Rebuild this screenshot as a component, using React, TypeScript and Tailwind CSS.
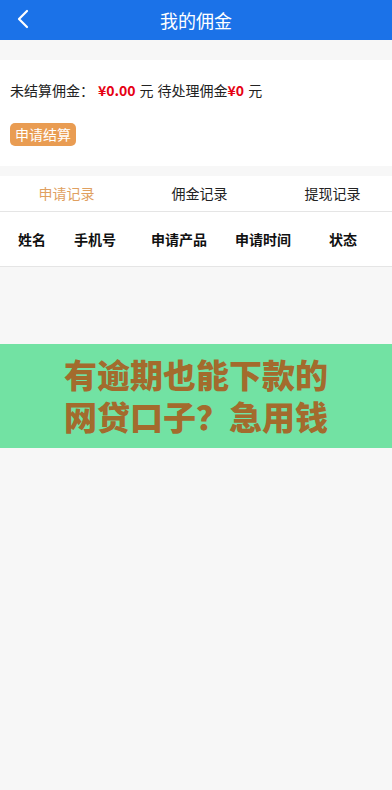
import React from "react";

export default function App() {
  const font = { fontFamily: '"Noto Sans CJK SC", "Noto Sans", sans-serif' };
  return (
    <div className="w-[392px] h-[790px] bg-[#f7f7f7] flex flex-col overflow-hidden" style={font}>
      <div className="h-[40px] bg-[#1b72e8] flex items-center relative shrink-0">
        <svg className="absolute left-[16px] top-[9px]" width="14" height="20" viewBox="0 0 14 20">
          <path d="M11 2 L3 10 L11 18" fill="none" stroke="white" strokeWidth="2.2" strokeLinecap="round" strokeLinejoin="round" />
        </svg>
        <div className="flex-1 text-center text-white text-[18px]">我的佣金</div>
      </div>
      <div className="h-[20px] shrink-0" />
      <div className="bg-white h-[106px] shrink-0 px-[10px] pt-[18px]">
        <div className="text-[14px] text-[#222] leading-[24px] flex items-center">
          <span>未结算佣金：</span>
          <span className="text-[#e60012] font-bold ml-[4px]">¥0.00</span>
          <span className="ml-[4px]">元</span>
          <span className="ml-[4px]">待处理佣金</span>
          <span className="text-[#e60012] font-bold">¥0</span>
          <span className="ml-[4px]">元</span>
        </div>
        <div className="mt-[19px]">
          <span className="inline-block bg-[#e99c52] text-white text-[14px] leading-[23px] px-[5px] rounded-[5px]">申请结算</span>
        </div>
      </div>
      <div className="h-[10px] shrink-0" />
      <div className="bg-white h-[36px] flex items-center border-b border-[#e5e5e5] shrink-0 text-[14px] overflow-hidden">
        <div className="w-[133px] shrink-0 text-center text-[#e0a060]">申请记录</div>
        <div className="w-[133px] shrink-0 text-center text-[#222]">佣金记录</div>
        <div className="w-[133px] shrink-0 text-center text-[#222]">提现记录</div>
      </div>
      <div className="bg-white h-[55px] flex items-center border-b border-[#e5e5e5] shrink-0 text-[14px] font-bold text-[#111]">
        <div className="w-[64px] text-center">姓名</div>
        <div className="w-[62px] text-center">手机号</div>
        <div className="w-[106px] text-center">申请产品</div>
        <div className="w-[62px] text-center">申请时间</div>
        <div className="flex-1 text-center">状态</div>
      </div>
      <div className="h-[77px] shrink-0" />
      <div className="bg-[#72e2a3] h-[104px] shrink-0 flex flex-col items-center justify-center text-[#a36b2d] font-black text-[33px] leading-[42px] pb-[2px]">
        <div>有逾期也能下款的</div>
        <div>网贷口子？急用钱</div>
      </div>
    </div>
  );
}
